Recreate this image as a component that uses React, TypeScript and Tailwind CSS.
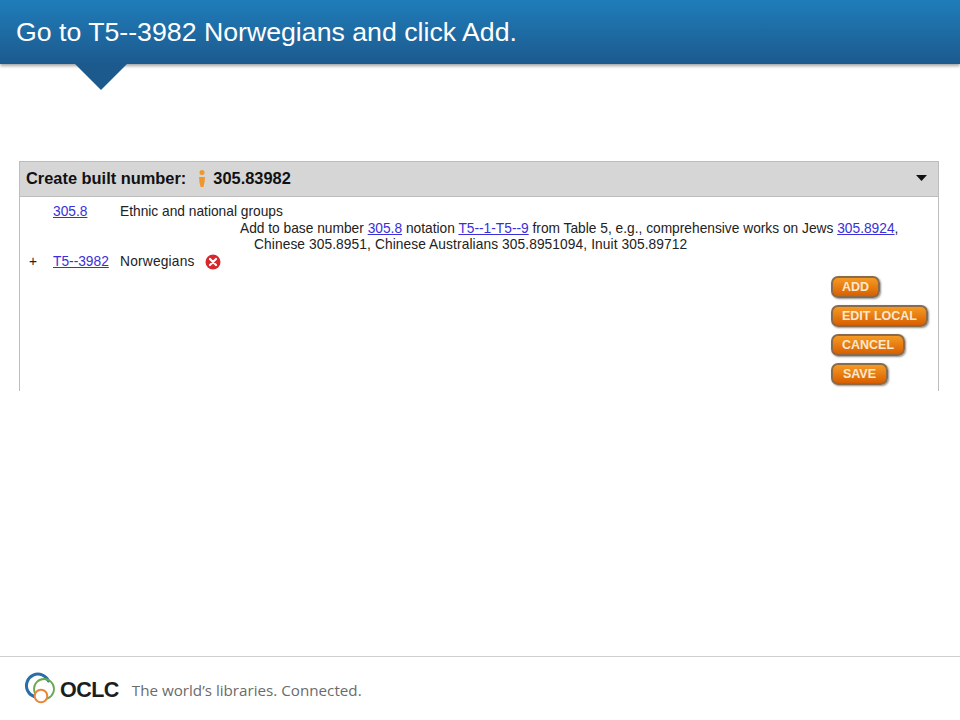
import React from 'react';

const Link = ({ children }: { children: React.ReactNode }) => (
  <a href="#" className="text-[#3a2fd8] underline">{children}</a>
);

const OrangeButton = ({ label, className = '' }: { label: string; className?: string }) => (
  <button className={`h-[22px] rounded-[7px] border-2 border-[#8a6a48] bg-gradient-to-b from-[#f59a22] to-[#d85f00] px-[9px] text-[12.5px] leading-[18px] font-bold text-[#fbe8d0] shadow-[1px_1px_2px_rgba(70,70,70,0.6)] ${className}`}>
    {label}
  </button>
);

const OclcLogo = () => (
  <svg className="-mt-[5px]" width="34" height="36" viewBox="0 0 34 36" fill="none">
    <path d="M19 26 A11.5 11.5 0 1 1 24.5 11" stroke="#2a6da8" strokeWidth="3" strokeLinecap="round" />
    <circle cx="20" cy="19" r="10" stroke="#6aa84f" strokeWidth="1.8" />
    <circle cx="17" cy="26" r="6.3" fill="#fff" stroke="#e8873a" strokeWidth="2" />
  </svg>
);

export default function App() {
  return (
    <div className="relative flex h-[720px] w-[960px] flex-col overflow-hidden bg-white font-['Liberation_Sans',Arial,sans-serif]">
      <header className="flex h-[64px] shrink-0 items-center bg-gradient-to-b from-[#1f7dba] to-[#1c5a8e] pl-[16px] shadow-[0_2px_3px_rgba(90,90,90,0.55)]">
        <h1 className="text-[26.7px] leading-none text-white">Go to T5--3982 Norwegians and click Add.</h1>
      </header>
      {/* callout arrow under the title bar */}
      <svg className="absolute top-[64px] left-[75px]" width="52" height="28" viewBox="0 0 52 28">
        <polygon points="0,0 52,0 26,26" fill="#1c5a8e" />
      </svg>

      <section className="mt-[97px] ml-[19px] h-[230px] w-[920px] border-x border-t border-[#bdbdbd] text-[13.75px] leading-[16.7px] text-[#222]">
        <div className="flex h-[35px] items-center justify-between border-b border-[#bdbdbd] bg-[#d6d6d6] pr-[11px] pb-[2px] pl-[6px]">
          <div className="flex items-center text-[16.4px] font-bold text-[#111]">
            <span>Create built number:</span>
            <svg className="mr-[7px] ml-[12px]" width="8" height="17" viewBox="0 0 8 17">
              <circle cx="4" cy="2.5" r="2.5" fill="#f0962a" />
              <path d="M1 7 h6 l-0.6 6 l-1 4 h-2.8 l-1 -4 z" fill="#f0962a" />
            </svg>
            <span>305.83982</span>
          </div>
          <svg width="11" height="6" viewBox="0 0 11 6">
            <polygon points="0,0 11,0 5.5,6" fill="#111" />
          </svg>
        </div>

        <div className="pt-[7px]">
          <div className="grid grid-cols-[33px_67px_1fr]">
            <span />
            <Link>305.8</Link>
            <span>Ethnic and national groups</span>
          </div>
          <div className="pl-[220px]">
            <p className="w-[670px] pl-[14px] -indent-[14px]">
              Add to base number <Link>305.8</Link> notation <Link>T5--1-T5--9</Link> from Table 5, e.g., comprehensive works on Jews <Link>305.8924</Link>, <span className="tracking-[0.09px]">Chinese 305.8951, Chinese Australians 305.8951094, Inuit 305.89712</span>
            </p>
          </div>
          <div className="grid grid-cols-[33px_67px_1fr]">
            <span className="pl-[9px]">+</span>
            <Link>T5--3982</Link>
            <span className="flex items-center gap-[10px] tracking-[0.2px]">
              Norwegians
              <svg width="16" height="16" viewBox="0 0 16 16">
                <circle cx="8" cy="8" r="7.5" fill="#d8282c" />
                <path d="M5 5 L11 11 M11 5 L5 11" stroke="#fff" strokeWidth="2.2" strokeLinecap="round" />
              </svg>
            </span>
          </div>
          <div className="mt-[5px] ml-[811px] flex flex-col items-start gap-[7px]">
            <OrangeButton label="ADD" />
            <OrangeButton label="EDIT LOCAL" />
            <OrangeButton label="CANCEL" />
            <OrangeButton label="SAVE" className="w-[57px]" />
          </div>
        </div>
      </section>

      <footer className="mt-auto flex h-[64px] items-center border-t border-[#cfcfcf] pt-[3px] pl-[24px]">
        <OclcLogo />
        <span className="ml-[2px] text-[21.5px] font-bold tracking-tight text-[#1d1d1d]">OCLC</span>
        <span className="ml-[13px] font-['Open_Sans',sans-serif] text-[15.2px] text-[#6b6b6b]">The world’s libraries. Connected.</span>
      </footer>
    </div>
  );
}
